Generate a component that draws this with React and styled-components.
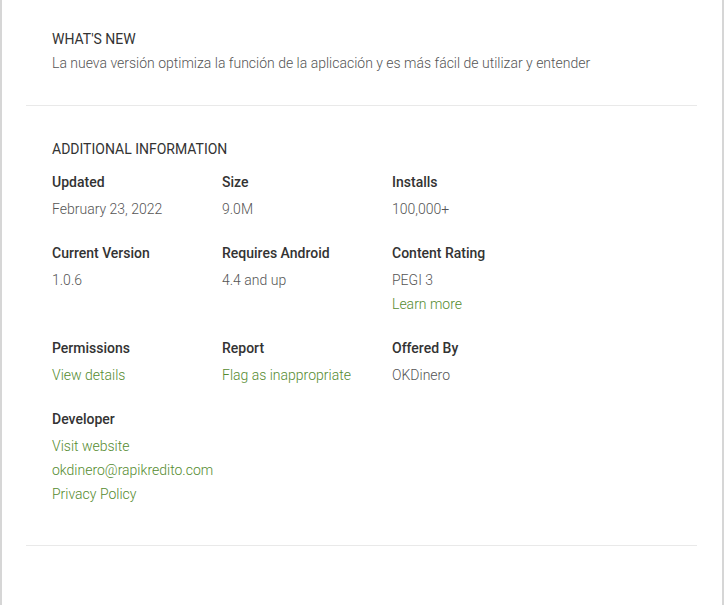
import React from "react";
import styled, { createGlobalStyle } from "styled-components";

const GlobalStyle = createGlobalStyle`
  html, body {
    margin: 0;
    padding: 0;
    background: #fff;
  }
  body {
    font-family: Roboto, "Liberation Sans", Arial, sans-serif;
  }
`;

const Page = styled.div`
  box-sizing: border-box;
  width: 724px;
  min-height: 605px;
  border-left: 2px solid #d6d6d6;
  border-right: 2px solid #d6d6d6;
  background: #fff;
`;

const Section = styled.section`
  padding: ${(p) => (p.$top ? p.$top : 27)}px 50px 30px;
`;

const Divider = styled.hr`
  margin: 0 25px 0 24px;
  border: 0;
  border-top: 1px solid #e9e9e9;
  height: 0;
`;

const Heading = styled.h2`
  margin: 0;
  font-size: 14px;
  font-weight: 400;
  line-height: 24px;
  color: #333;
  text-transform: uppercase;
`;

const Body = styled.p`
  margin: 0;
  font-size: 14px;
  font-weight: 300;
  line-height: 24px;
  color: #555;
`;

const Grid = styled.div`
  display: grid;
  grid-template-columns: repeat(3, 170px);
  row-gap: 20px;
  margin-top: 9px;
  margin-bottom: 9px;
`;

const Field = styled.div`
  display: flex;
  flex-direction: column;
`;

const Label = styled.div`
  font-size: 14px;
  font-weight: 500;
  line-height: 24px;
  color: #333;
  margin-bottom: 3px;
`;

const Value = styled.div`
  font-size: 14px;
  font-weight: 300;
  line-height: 24px;
  color: #555;
`;

const Link = styled.a`
  font-size: 14px;
  font-weight: 300;
  line-height: 24px;
  color: #558b2f;
  text-decoration: none;
  cursor: pointer;
`;

const fields = [
  { label: "Updated", values: ["February 23, 2022"] },
  { label: "Size", values: ["9.0M"] },
  { label: "Installs", values: ["100,000+"] },
  { label: "Current Version", values: ["1.0.6"] },
  { label: "Requires Android", values: ["4.4 and up"] },
  { label: "Content Rating", values: ["PEGI 3"], links: ["Learn more"] },
  { label: "Permissions", links: ["View details"] },
  { label: "Report", links: ["Flag as inappropriate"] },
  { label: "Offered By", values: ["OKDinero"] },
  {
    label: "Developer",
    links: ["Visit website", "okdinero@rapikredito.com", "Privacy Policy"],
  },
];

function App() {
  return (
    <Page>
      <GlobalStyle />
      <Section>
        <Heading>What's New</Heading>
        <Body>
          La nueva versión optimiza la función de la aplicación y es más fácil de
          utilizar y entender
        </Body>
      </Section>
      <Divider />
      <Section $top={31}>
        <Heading>Additional Information</Heading>
        <Grid>
          {fields.map((f) => (
            <Field key={f.label}>
              <Label>{f.label}</Label>
              {(f.values || []).map((v) => (
                <Value key={v}>{v}</Value>
              ))}
              {(f.links || []).map((l) => (
                <Link key={l}>{l}</Link>
              ))}
            </Field>
          ))}
        </Grid>
      </Section>
      <Divider />
    </Page>
  );
}

export default App;
